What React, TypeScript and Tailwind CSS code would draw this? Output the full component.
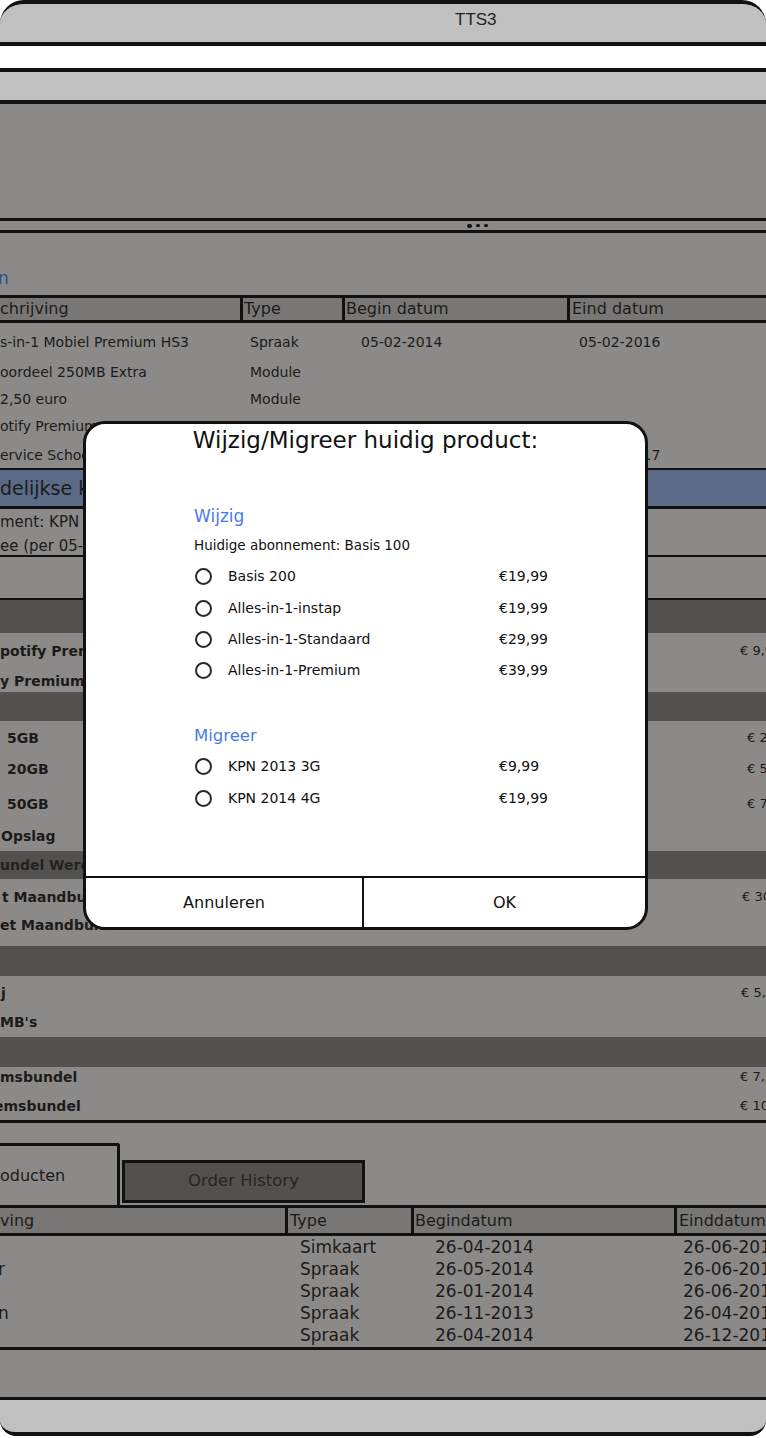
import React from "react";

const Radio = () => (
  <span className="block w-[17px] h-[17px] rounded-full border-2 border-[#2a2a2a] bg-white" />
);

const Option = ({ label, price, className = "" }: { label: string; price: string; className?: string }) => (
  <div className={`grid grid-cols-[34px_271px_1fr] items-center h-[31px] ${className}`}>
    <div className="pl-[1px]">
      <Radio />
    </div>
    <span>{label}</span>
    <span>{price}</span>
  </div>
);

const Line = ({ text, price, className = "" }: { text: string; price?: string; className?: string }) => (
  <div className={`grid grid-cols-[740px_1fr] h-[20px] leading-[20px] whitespace-nowrap ${className}`}>
    <span className="font-bold text-[14px]">{text}</span>
    <span className="text-[13px]">{price}</span>
  </div>
);

const Band = ({ className = "", children }: { className?: string; children?: React.ReactNode }) => (
  <div className={`bg-[#535150] flex items-center whitespace-nowrap ${className}`}>{children}</div>
);

export default function App() {
  return (
    <div className="w-[766px] h-[1438px] bg-white font-['DejaVu_Sans',sans-serif] text-[#1c1b1a]">
      <div className="relative h-[1436px] overflow-hidden rounded-t-[24px] rounded-b-[16px] border-y-4 border-[#111] bg-[#8b8a89]">
        {/* window title */}
        <div className="h-[38px] bg-[#c0c0c0] pl-[455px] pt-[3px] font-['Liberation_Sans',sans-serif] text-[17px] text-[#222]">
          TTS3
        </div>
        <div className="h-[4px] bg-[#111]" />
        <div className="h-[22px] bg-white" />
        <div className="h-[4px] bg-[#111]" />
        <div className="h-[28px] bg-[#c0c0c0]" />
        <div className="h-[4px] bg-[#111]" />
        <div className="h-[114px]" />
        <div className="h-[3px] bg-[#111]" />
        <div className="h-[9px] flex items-center pl-[467px] gap-[4px]">
          <span className="w-[5px] h-[4px] rounded-full bg-[#111]" />
          <span className="w-[4px] h-[3px] rounded-full bg-[#111]" />
          <span className="w-[4px] h-[3px] rounded-full bg-[#111]" />
        </div>
        <div className="h-[3px] bg-[#111]" />
        <div className="h-[62px] pt-[35px]">
          <div className="h-[20px] leading-[20px] text-[17px] text-[#2f4f8f] -ml-[2px]">n</div>
        </div>
        <div className="h-[3px] bg-[#111]" />

        {/* first table */}
        <div className="h-[22px] bg-[#787776] flex text-[16px] leading-[22px] whitespace-nowrap">
          <div className="w-[243px] border-r-[3px] border-[#111]">chrijving</div>
          <div className="w-[102px] border-r-[3px] border-[#111] pl-[1px]">Type</div>
          <div className="w-[225px] border-r-[3px] border-[#111] pl-[1px]">Begin datum</div>
          <div className="pl-[2px]">Eind datum</div>
        </div>
        <div className="h-[3px] bg-[#111]" />
        <div className="h-[145px] flex flex-col text-[14px] whitespace-nowrap">
          {[
            ["s-in-1 Mobiel Premium HS3", "Spraak", "05-02-2014", "05-02-2016", "mt-[9px]"],
            ["oordeel 250MB Extra", "Module", "", "", "mt-[10px]"],
            ["2,50 euro", "Module", "", "", "mt-[7px]"],
            ["otify Premium", "", "", "", "mt-[7px]"],
            ["ervice Schoonmaak", "", "", "05-02-2017", "mt-[9px]"],
          ].map(([a, b, c, d, m]) => (
            <div key={a} className={`grid grid-cols-[250px_111px_218px_1fr] h-[20px] leading-[20px] ${m}`}>
              <span>{a}</span>
              <span>{b}</span>
              <span>{c}</span>
              <span>{d}</span>
            </div>
          ))}
        </div>
        <div className="h-[2px] bg-[#111]" />
        <div className="h-[36px] bg-[#5b6b87] text-[19px] leading-[36px] whitespace-nowrap">delijkse kosten</div>
        <div className="h-[3px] bg-[#111]" />
        <div className="h-[46px] flex flex-col text-[15px] whitespace-nowrap">
          <div className="h-[18px] leading-[18px] mt-[4px]">ment: KPN 2013</div>
          <div className="h-[18px] leading-[18px] mt-[6px]">ee (per 05-02-2014)</div>
        </div>
        <div className="h-[2px] bg-[#111]" />
        <div className="h-[41px]" />
        <div className="h-[2px] bg-[#111]" />

        {/* lower list */}
        <Band className="h-[33px]" />
        <div className="h-[59px] flex flex-col">
          <Line text="potify Premium" price="€ 9,99" className="mt-[8px]" />
          <Line text="y Premium" className="mt-[10px]" />
        </div>
        <Band className="h-[29px]" />
        <div className="h-[130px] flex flex-col">
          <Line text="5GB" price="€ 2,50" className="mt-[7px] pl-[7px] grid-cols-[733px_1fr]" />
          <Line text="20GB" price="€ 5,00" className="mt-[11px] pl-[7px] grid-cols-[733px_1fr]" />
          <Line text="50GB" price="€ 7,50" className="mt-[15px] pl-[7px] grid-cols-[733px_1fr]" />
          <Line text="Opslag" className="mt-[12px] pl-[1px]" />
        </div>
        <Band className="h-[28px]">
          <span className="font-bold text-[14px] text-[#222]">undel Wereld</span>
        </Band>
        <div className="h-[67px] flex flex-col">
          <Line text="t Maandbundel" price="€ 30,00" className="mt-[8px] pl-[2px] grid-cols-[738px_1fr]" />
          <Line text="et Maandbundel" className="mt-[8px]" />
        </div>
        <Band className="h-[30px]" />
        <div className="h-[61px] flex flex-col">
          <Line text="j" price="€ 5,00" className="mt-[7px] pl-[1px] grid-cols-[739px_1fr]" />
          <Line text="MB's" className="mt-[9px]" />
        </div>
        <Band className="h-[30px]" />
        <div className="h-[53px] flex flex-col">
          <Line text="msbundel" price="€ 7,50" />
          <Line text="emsbundel" price="€ 10,00" className="mt-[9px] -ml-[6px] grid-cols-[746px_1fr]" />
        </div>
        <div className="h-[3px] bg-[#111]" />

        {/* tabs */}
        <div className="h-[82px] flex items-end text-[16px] whitespace-nowrap">
          <div className="w-[120px] h-[62px] border-t-[3px] border-r-[3px] border-[#111] bg-[#8b8a89] rounded-tr-[3px] flex items-center">
            oducten
          </div>
          <div className="ml-[2px] mb-[2px] w-[243px] h-[43px] border-[3px] border-[#111] bg-[#535150] flex items-center justify-center text-[16.5px] text-[#262524]">
            Order History
          </div>
        </div>
        <div className="h-[3px] bg-[#111]" />
        <div className="h-[25px] bg-[#787776] flex text-[16px] leading-[25px] whitespace-nowrap">
          <div className="w-[288px] border-r-[3px] border-[#111]">ving</div>
          <div className="w-[126px] border-r-[3px] border-[#111] pl-[2px]">Type</div>
          <div className="w-[263px] border-r-[3px] border-[#111] pl-[1px]">Begindatum</div>
          <div className="pl-[2px]">Einddatum</div>
        </div>
        <div className="h-[3px] bg-[#111]" />
        <div className="h-[111px] text-[17px] leading-[22px] whitespace-nowrap">
          {[
            ["", "Simkaart", "26-04-2014", "26-06-2016"],
            ["r", "Spraak", "26-05-2014", "26-06-2016"],
            ["", "Spraak", "26-01-2014", "26-06-2016"],
            ["n", "Spraak", "26-11-2013", "26-04-2015"],
            ["", "Spraak", "26-04-2014", "26-12-2016"],
          ].map(([a, b, c, d], i) => (
            <div key={i} className="grid grid-cols-[300px_135px_248px_1fr] h-[22px]">
              <span className="-ml-[2px]">{a}</span>
              <span>{b}</span>
              <span>{c}</span>
              <span>{d}</span>
            </div>
          ))}
        </div>
        <div className="h-[3px] bg-[#111]" />
        <div className="h-[47px]" />
        <div className="h-[3px] bg-[#111]" />
        <div className="h-[32px] bg-[#c0c0c0]" />

        {/* modal */}
        <div className="absolute left-[83px] top-[417px] w-[565px] h-[509px] rounded-[22px] border-[3px] border-[#111] bg-white text-[#111] flex flex-col overflow-hidden">
          <div className="flex-1">
            <div className="mt-[2px] h-[28px] leading-[28px] text-center text-[23px]">Wijzig/Migreer huidig product:</div>
            <div className="pl-[108px] text-[14px]">
              <div className="mt-[51px] h-[22px] leading-[22px] text-[17px] text-[#4b7bec]">Wijzig</div>
              <div className="mt-[8px] h-[20px] leading-[20px] text-[13.5px]">Huidige abonnement: Basis 100</div>
              <Option label="Basis 200" price="€19,99" className="mt-[6px]" />
              <Option label="Alles-in-1-instap" price="€19,99" className="h-[32px]" />
              <Option label="Alles-in-1-Standaard" price="€29,99" className="h-[31px]" />
              <Option label="Alles-in-1-Premium" price="€39,99" />
              <div className="mt-[39px] h-[22px] leading-[22px] text-[16.5px] text-[#4b7bec]">Migreer</div>
              <Option label="KPN 2013 3G" price="€9,99" className="mt-[3px] h-[32px]" />
              <Option label="KPN 2014 4G" price="€19,99" className="h-[33px]" />
            </div>
          </div>
          <div className="h-[51px] border-t-2 border-[#111] flex text-[16px]">
            <div className="w-[278px] border-r-2 border-[#111] flex items-center justify-center">Annuleren</div>
            <div className="flex-1 flex items-center justify-center">OK</div>
          </div>
        </div>
      </div>
    </div>
  );
}
